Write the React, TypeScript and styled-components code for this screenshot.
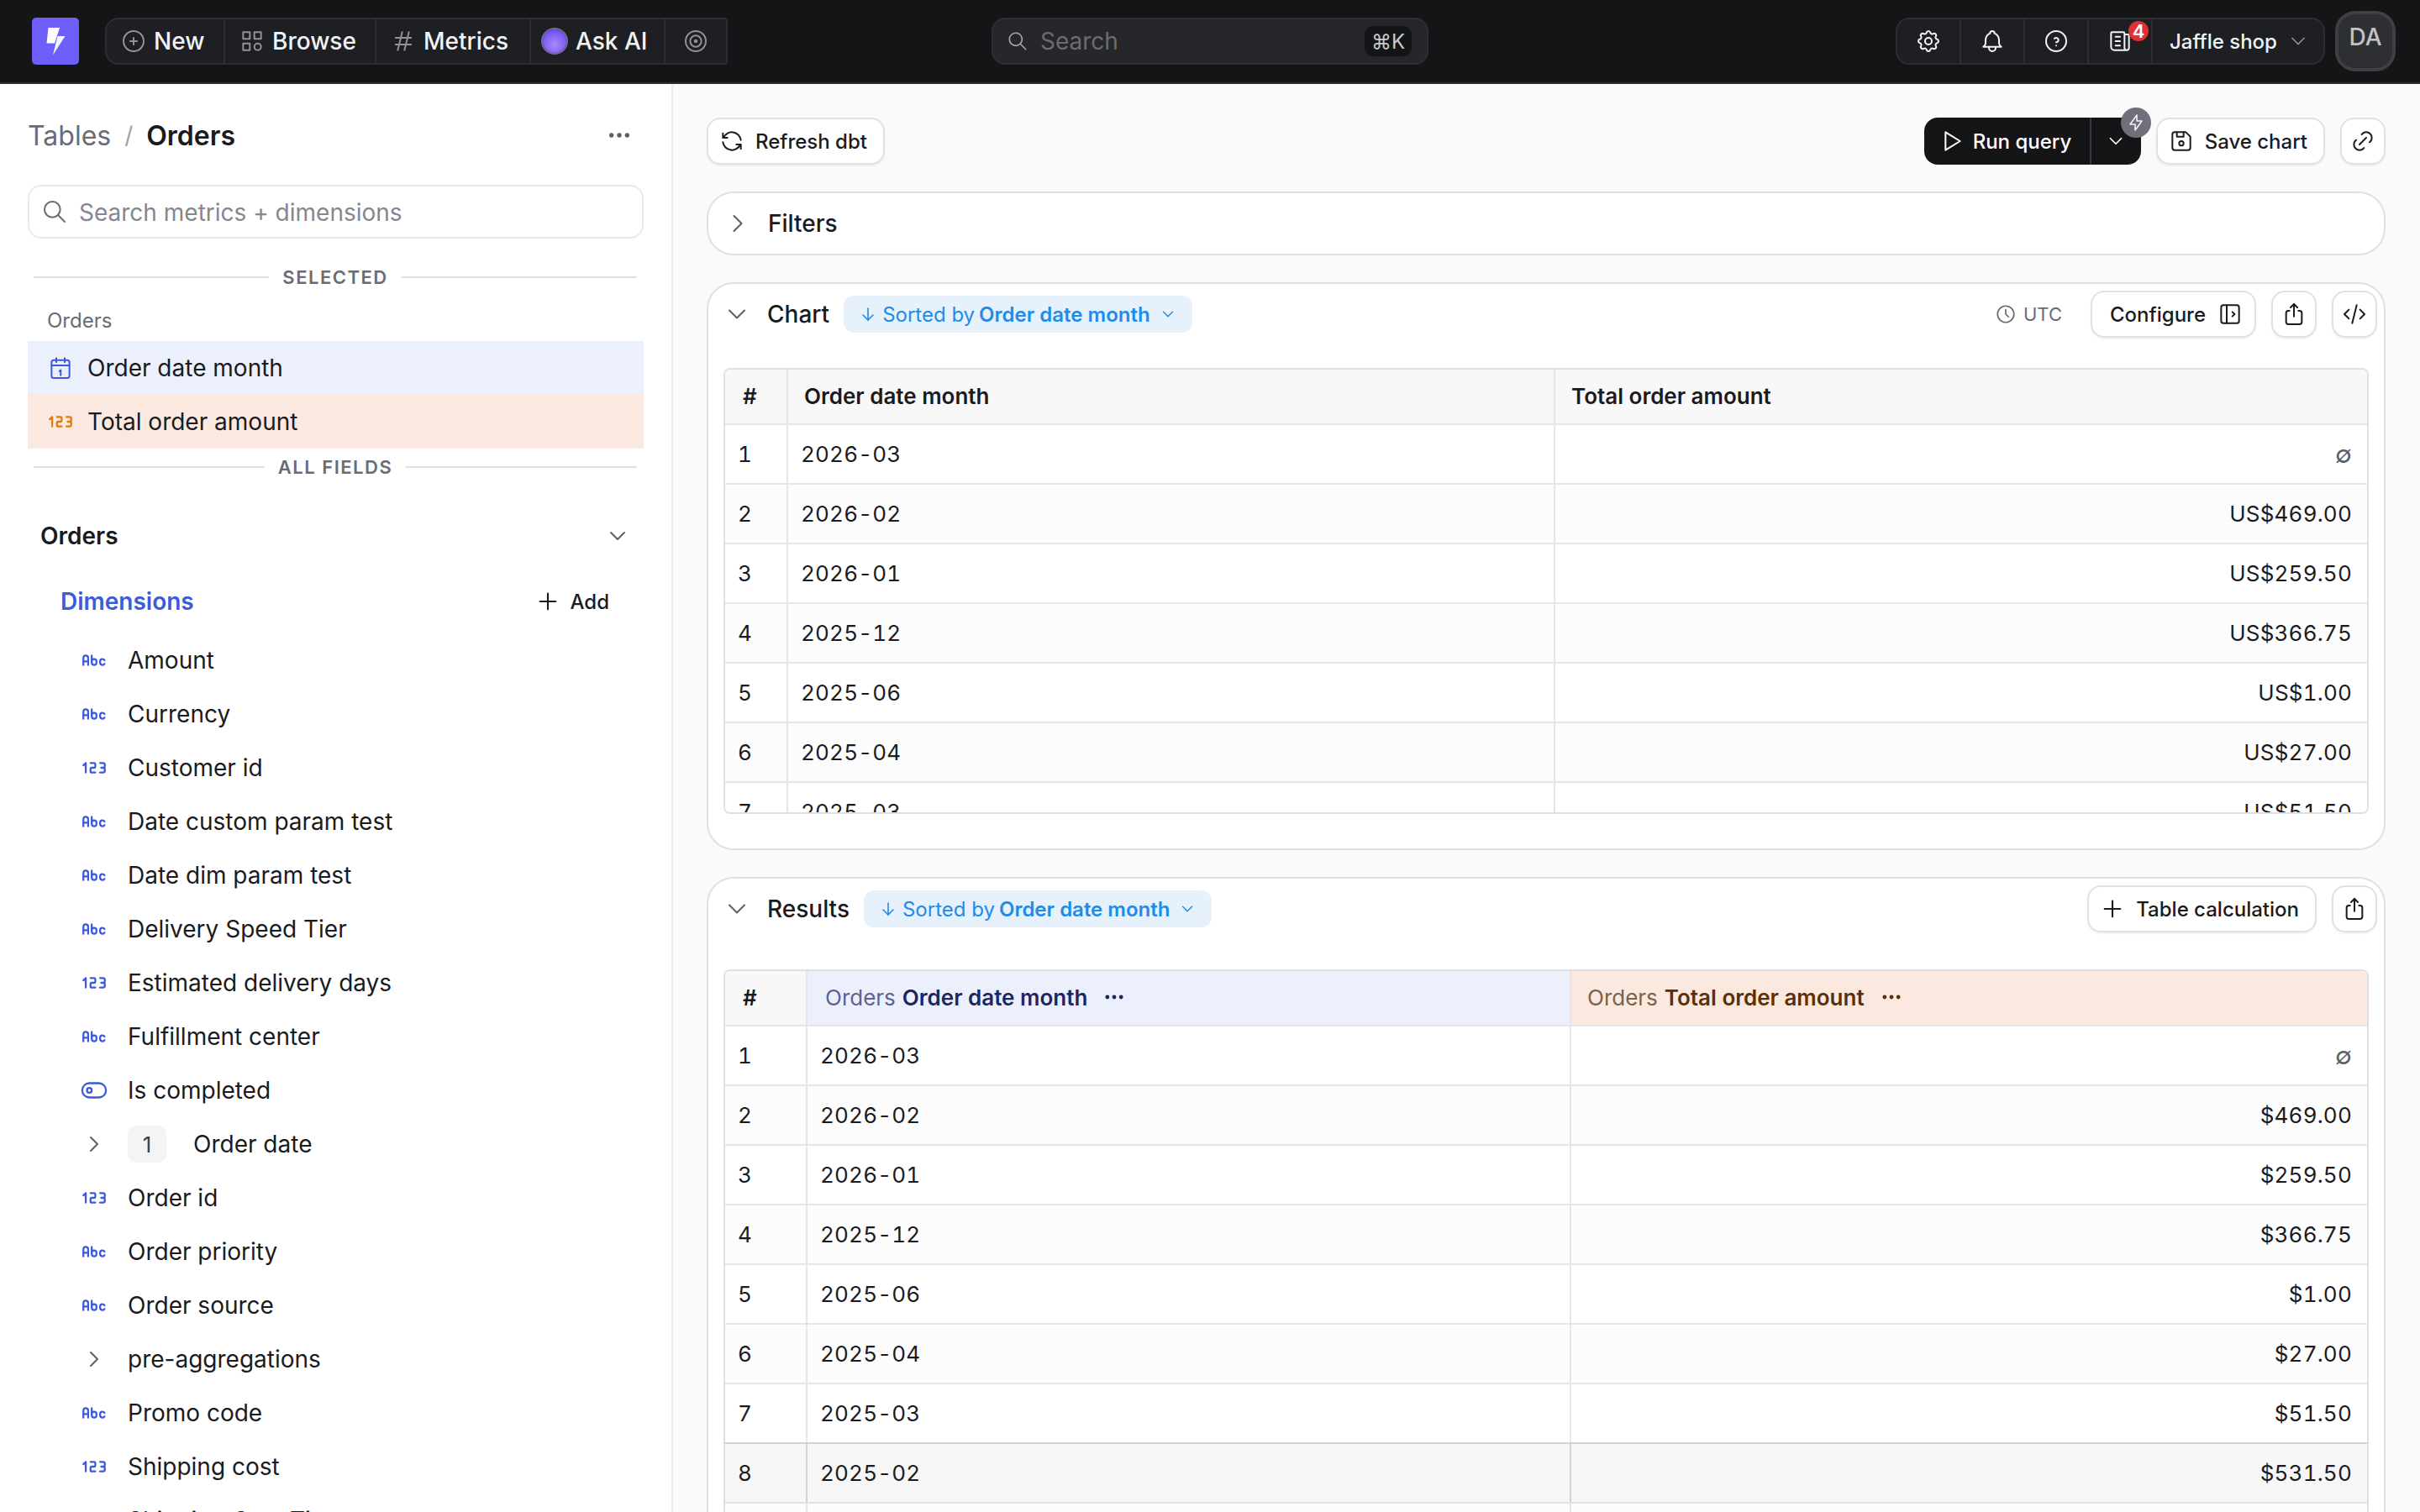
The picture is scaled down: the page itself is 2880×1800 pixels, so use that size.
import { FC, ReactNode } from "react";
import styled, { createGlobalStyle } from "styled-components";
import {
  TbAbc,
  TbBell,
  TbBolt,
  TbCategory,
  TbChevronDown,
  TbChevronRight,
  TbCirclePlus,
  TbClock,
  TbCode,
  TbDeviceFloppy,
  TbDots,
  TbHash,
  TbHelpCircle,
  TbLayoutSidebarLeftExpand,
  TbLink,
  TbNews,
  TbNumber123,
  TbPlayerPlay,
  TbPlus,
  TbRefresh,
  TbSearch,
  TbSettings,
  TbShare2,
  TbTarget,
  TbToggleLeft,
  TbArrowDown,
} from "react-icons/tb";

const GlobalStyle = createGlobalStyle`
  html, body {
    margin: 0;
    height: 1800px;
    overflow: hidden;
    background: #fafafa;
  }
  body, button, input {
    font-family: Inter, "Noto Sans", sans-serif;
    color: #1a1b1e;
  }
  * { box-sizing: border-box; }
`;

const Page = styled.div`
  display: flex;
  flex-direction: column;
  height: 1800px;
  overflow: hidden;
`;

/* top bar */

const TopBar = styled.header`
  display: grid;
  grid-template-columns: 1fr 520px 1fr;
  align-items: center;
  height: 100px;
  padding: 0 29px;
  background: #141517;
  border-bottom: 2px solid #2c2e33;
  flex: none;
`;

const BarSide = styled.div<{ $end?: boolean }>`
  display: flex;
  align-items: center;
  justify-content: ${(p) => (p.$end ? "flex-end" : "flex-start")};
`;

const Logo = styled.svg`
  width: 56px;
  height: 56px;
  margin: 0 31px 0 9px;
  flex: none;
`;

const SegGroup = styled.div<{ $roundEnd?: boolean }>`
  display: flex;
  height: 56px;
  background: #1e1f22;
  border: 2px solid #2c2e33;
  border-radius: ${(p) => (p.$roundEnd ? "16px" : "16px 4px 4px 16px")};
  overflow: hidden;
`;

const NavItem = styled.div<{ $w: number }>`
  display: flex;
  align-items: center;
  gap: 8px;
  width: ${(p) => p.$w}px;
  padding-left: 16px;
  font-size: 28px;
  font-weight: 500;
  color: #f1f3f5;
  border-right: 2px solid #2c2e33;
  &:last-child { border-right: 0; }
  svg { color: #909296; flex: none; }
`;

const IconSeg = styled.div<{ $w?: number }>`
  position: relative;
  display: flex;
  align-items: center;
  justify-content: center;
  width: ${(p) => p.$w ?? 76}px;
  color: #f1f3f5;
  border-right: 2px solid #2c2e33;
  &:last-child { border-right: 0; }
`;

const Sphere = styled.span`
  width: 28px;
  height: 28px;
  border-radius: 50%;
  flex: none;
  margin-left: -2px;
  margin-right: 3px;
  background: radial-gradient(circle at 50% 65%, #a78bfa 0%, #7c5cf5 60%, #5b3fd6 100%);
  box-shadow: 0 0 0 2px rgba(190, 170, 255, 0.55);
`;

const BarSearch = styled.div`
  display: flex;
  align-items: center;
  height: 56px;
  padding: 0 16px 0 16px;
  gap: 14px;
  background: #27272b;
  border: 2px solid #2e2f33;
  border-radius: 16px;
  font-size: 28px;
  color: #6b6c72;
  svg { color: #a6a7ab; }
`;

const Kbd = styled.span`
  margin-left: auto;
  display: flex;
  align-items: center;
  justify-content: center;
  width: 60px;
  height: 40px;
  background: #141517;
  border: 2px solid #25262b;
  border-radius: 12px;
  font-size: 24px;
  color: #c9cacd;
`;

const CountBadge = styled.span`
  position: absolute;
  top: 2px;
  right: 3px;
  width: 24px;
  height: 24px;
  border-radius: 50%;
  background: #e03131;
  color: #fff;
  font-size: 22px;
  font-weight: 600;
  line-height: 24px;
  text-align: center;
`;

const Workspace = styled.div`
  display: flex;
  align-items: center;
  width: 203px;
  padding-left: 20px;
  gap: 11px;
  font-size: 24px;
  font-weight: 500;
  color: #f1f3f5;
  svg { color: #909296; }
`;

const Avatar = styled.div`
  width: 72px;
  height: 72px;
  margin-left: 12px;
  padding-top: 10px;
  border-radius: 24px;
  background: #2e2f33;
  border: 4px solid #3f4044;
  color: #c1c2c5;
  font-size: 28px;
  font-weight: 500;
  text-align: center;
`;

/* layout */

const Body = styled.div`
  flex: 1;
  min-height: 0;
  display: grid;
  grid-template-columns: 801px 1fr;
`;

const Sidebar = styled.aside`
  background: #fff;
  border-right: 2px solid #ececee;
  padding: 41px 33px 0;
  overflow: hidden;
`;

const Crumbs = styled.div`
  display: flex;
  align-items: center;
  height: 40px;
  margin-bottom: 39px;
  font-size: 32px;
  color: #6b6b74;
  svg { margin-left: auto; margin-right: 13px; color: #5c5f66; }
`;

const CrumbSep = styled.span`
  margin: 0 16px;
  font-size: 28px;
  color: #a0a2a8;
`;

const CrumbNow = styled.span`
  font-weight: 600;
  color: #1a1b1e;
`;

const SideSearch = styled.div`
  display: flex;
  align-items: center;
  gap: 13px;
  height: 64px;
  padding: 2px 0 0 14px;
  border: 2px solid #e9e9ec;
  border-radius: 16px;
  font-size: 28px;
  color: #868690;
  svg { color: #6b6b74; margin-top: -2px; }
`;

const Divider = styled.div<{ $top: number }>`
  display: flex;
  align-items: center;
  gap: 16px;
  height: 30px;
  margin: ${(p) => p.$top}px 8px 0 7px;
  font-size: 22px;
  font-weight: 600;
  letter-spacing: 1.5px;
  color: #6b6b74;
  &::before, &::after {
    content: "";
    flex: 1;
    height: 2px;
    background: #dee0e4;
  }
`;

const TableLabel = styled.div`
  height: 30px;
  margin: 22px 0 9px 23px;
  font-size: 24px;
  line-height: 30px;
  color: #6b6b74;
`;

const SelectedRow = styled.div<{ $bg: string; $fg: string }>`
  display: flex;
  align-items: center;
  height: 64px;
  padding-left: 19px;
  gap: 12px;
  background: ${(p) => p.$bg};
  font-size: 28px;
  svg { color: ${(p) => p.$fg}; }
`;

const IconBox = styled.span`
  display: flex;
  align-items: center;
  justify-content: center;
  width: 40px;
  flex: none;
`;

const GroupTitle = styled.div`
  display: flex;
  align-items: center;
  justify-content: space-between;
  height: 40px;
  margin-top: 47px;
  padding: 0 15px;
  font-size: 28px;
  font-weight: 600;
  svg { color: #5c5f66; }
`;

const SectionTitle = styled.div`
  display: flex;
  align-items: center;
  justify-content: space-between;
  height: 40px;
  margin-top: 38px;
  padding: 0 41px 0 39px;
  font-size: 28px;
  font-weight: 600;
  color: #3b5bdb;
`;

const AddLink = styled.span`
  display: flex;
  align-items: center;
  gap: 11px;
  font-size: 24px;
  font-weight: 500;
  color: #1a1b1e;
`;

const FieldList = styled.div`
  margin-top: 18px;
`;

const FieldRow = styled.div`
  display: flex;
  align-items: center;
  height: 64px;
  padding-left: 59px;
  gap: 20px;
  font-size: 28px;
  svg { color: #3b5bdb; }
`;

const CountChip = styled.span`
  display: flex;
  align-items: center;
  justify-content: center;
  width: 46px;
  height: 44px;
  margin-right: 12px;
  border-radius: 10px;
  background: #f4f4f5;
  font-size: 26px;
  color: #3f4046;
`;

const Main = styled.main`
  min-width: 0;
  padding: 40px 41px 0 40px;
  overflow: hidden;
`;

const Toolbar = styled.div`
  display: flex;
  align-items: center;
  height: 56px;
  margin-bottom: 32px;
`;

const Button = styled.button<{ $square?: boolean; $left?: number; $trailing?: boolean }>`
  display: flex;
  align-items: center;
  justify-content: center;
  gap: ${(p) => (p.$trailing ? 13 : 12)}px;
  height: 56px;
  margin-left: ${(p) => p.$left ?? 0}px;
  padding: ${(p) => (p.$square ? "0" : p.$trailing ? "0 13px 0 21px" : "0 19px 0 12px")};
  width: ${(p) => (p.$square ? "54px" : "auto")};
  background: #fff;
  border: 2px solid #e0e0e5;
  border-radius: 16px;
  box-shadow: 0 2px 2px rgba(20, 20, 30, 0.05);
  font-size: 24px;
  font-weight: 500;
  color: #1a1b1e;
`;

const RunWrap = styled.div`
  position: relative;
  display: flex;
  align-items: center;
  height: 56px;
  margin-left: auto;
  margin-right: 18px;
  background: #141517;
  border-radius: 16px;
  color: #fff;
  font-size: 24px;
  font-weight: 500;
`;

const RunMain = styled.span`
  display: flex;
  align-items: center;
  gap: 10px;
  width: 199px;
  height: 100%;
  padding-left: 16px;
  border-right: 2px solid #3a3b40;
`;

const RunCaret = styled.span`
  display: flex;
  align-items: center;
  justify-content: center;
  width: 59px;
`;

const BoltBadge = styled.span`
  position: absolute;
  top: -12px;
  right: -12px;
  display: flex;
  align-items: center;
  justify-content: center;
  width: 36px;
  height: 36px;
  border-radius: 50%;
  background: #6f7079;
  color: #f1f3f5;
`;

const FilterCard = styled.section`
  display: flex;
  align-items: center;
  gap: 18px;
  height: 76px;
  margin-bottom: 32px;
  padding-left: 17px;
  background: #fff;
  border: 2px solid #dee0e4;
  border-radius: 32px;
  font-size: 28px;
  font-weight: 500;
  svg { color: #5c5f66; }
`;

const Card = styled.section<{ $height: number }>`
  height: ${(p) => p.$height}px;
  margin-bottom: 32px;
  padding: 8px;
  background: #fff;
  border: 2px solid #dee0e4;
  border-radius: 32px;
`;

const CardHead = styled.div`
  display: flex;
  align-items: center;
  height: 56px;
  padding-left: 8px;
  font-size: 28px;
  font-weight: 500;
  > svg:first-child { color: #5c5f66; margin-right: 18px; }
`;

const SortPill = styled.span`
  display: flex;
  align-items: center;
  height: 44px;
  margin-left: 17px;
  padding: 0 18px 0 17px;
  border-radius: 12px;
  background: #e7f1fb;
  color: #228be6;
  font-size: 24px;
  font-weight: 400;
  b { font-weight: 600; margin-left: 5px; }
  svg:first-child { margin-right: 5px; }
  svg:last-child { margin-left: 10px; }
`;

const Utc = styled.span`
  display: flex;
  align-items: center;
  gap: 8px;
  margin-left: auto;
  margin-right: 34px;
  font-size: 22px;
  font-weight: 400;
  color: #6b6b74;
`;

const HeadRight = styled.span`
  margin-left: auto;
`;

const DataTable = styled.div<{ $top: number; $height?: number }>`
  margin: ${(p) => p.$top}px 10px 0 10px;
  ${(p) => (p.$height ? `height: ${p.$height}px;` : "")}
  border: 2px solid #dee0e4;
  border-radius: 8px;
  overflow: hidden;
`;

const Row = styled.div<{ $cols: string; $stripe?: boolean; $hovered?: boolean; $head?: boolean }>`
  display: grid;
  grid-template-columns: ${(p) => p.$cols};
  height: ${(p) => (p.$head ? 66 : 71)}px;
  border-bottom: 2px solid ${(p) => (p.$hovered ? "#e2e2e5" : "#e6e6e9")};
  background: ${(p) => (p.$hovered ? "#f6f6f6" : p.$stripe ? "#fcfcfc" : "#fff")};
  ${(p) => (p.$hovered ? "box-shadow: 0 -2px 0 #d2d2d4;" : "")}
`;

const Cell = styled.div<{ $right?: boolean; $hovered?: boolean }>`
  display: flex;
  align-items: center;
  justify-content: ${(p) => (p.$right ? "flex-end" : "flex-start")};
  padding: 0 18px 1px 15px;
  font-size: 26px;
  letter-spacing: 0.2px;
  font-feature-settings: "tnum";
  white-space: nowrap;
  border-right: 2px solid ${(p) => (p.$hovered ? "#d2d2d4" : "#e6e6e9")};
  &:last-child { border-right: 0; }
`;

const NullMark = styled.span`
  font-size: 29px;
  color: #5c5f66;
`;

const HeadCell = styled.div<{ $bg: string; $fg: string; $soft: string; $pad: number }>`
  display: flex;
  align-items: center;
  gap: 8px;
  padding: 0 0 2px ${(p) => p.$pad}px;
  background: ${(p) => p.$bg};
  font-size: 26px;
  font-weight: 600;
  color: ${(p) => p.$fg};
  border-right: 2px solid #e6e6e9;
  white-space: nowrap;
  &:last-child { border-right: 0; }
  i { font-style: normal; font-weight: 400; color: ${(p) => p.$soft}; }
  svg { margin-left: 10px; }
`;

/* icons */

const CalendarIcon = () => (
  <svg width="30" height="30" viewBox="0 0 24 24" fill="none" stroke="currentColor" strokeWidth="1.6" strokeLinecap="round" strokeLinejoin="round">
    <rect x="3.5" y="4.5" width="17" height="17" rx="2" />
    <path d="M16 2.5v4M8 2.5v4M3.5 9.5h17M11 15l1.2-1v5" />
  </svg>
);

type Field = {
  name: string;
  kind: "abc" | "num" | "bool" | "group";
  count?: number;
};

const fields: Field[] = [
  { name: "Amount", kind: "abc" },
  { name: "Currency", kind: "abc" },
  { name: "Customer id", kind: "num" },
  { name: "Date custom param test", kind: "abc" },
  { name: "Date dim param test", kind: "abc" },
  { name: "Delivery Speed Tier", kind: "abc" },
  { name: "Estimated delivery days", kind: "num" },
  { name: "Fulfillment center", kind: "abc" },
  { name: "Is completed", kind: "bool" },
  { name: "Order date", kind: "group", count: 1 },
  { name: "Order id", kind: "num" },
  { name: "Order priority", kind: "abc" },
  { name: "Order source", kind: "abc" },
  { name: "pre-aggregations", kind: "group" },
  { name: "Promo code", kind: "abc" },
  { name: "Shipping cost", kind: "num" },
  { name: "Shipping Cost Tier", kind: "abc" },
];

const rows: [string, string | null][] = [
  ["2026-03", null],
  ["2026-02", "469.00"],
  ["2026-01", "259.50"],
  ["2025-12", "366.75"],
  ["2025-06", "1.00"],
  ["2025-04", "27.00"],
  ["2025-03", "51.50"],
  ["2025-02", "531.50"],
];

const FieldIcon: FC<{ kind: Field["kind"] }> = ({ kind }) => {
  if (kind === "abc") return <TbAbc size={34} strokeWidth={1.6} />;
  if (kind === "num") return <TbNumber123 size={34} strokeWidth={1.6} />;
  if (kind === "bool") return <TbToggleLeft size={34} strokeWidth={1.6} />;
  return <TbChevronRight size={32} strokeWidth={1.5} style={{ color: "#5c5f66" }} />;
};

const Rows: FC<{ cols: string; prefix: string; hoverIndex?: number; tail?: boolean }> = ({
  cols,
  prefix,
  hoverIndex,
  tail,
}) => (
  <>
    {rows.map(([month, value], i) => (
      <Row key={month} $cols={cols} $stripe={i % 2 === 1} $hovered={i === hoverIndex}>
        <Cell $hovered={i === hoverIndex}>{i + 1}</Cell>
        <Cell $hovered={i === hoverIndex}>{month}</Cell>
        <Cell $right>
          {value ? `${prefix}${value}` : <NullMark>∅</NullMark>}
        </Cell>
      </Row>
    ))}
    {tail ? (
      <Row $cols={cols} $stripe>
        <Cell />
        <Cell />
        <Cell />
      </Row>
    ) : null}
  </>
);

const SortBadge = () => (
  <SortPill>
    <TbArrowDown size={24} strokeWidth={1.6} />
    Sorted by<b>Order date month</b>
    <TbChevronDown size={22} strokeWidth={1.6} />
  </SortPill>
);

const Nav: FC<{ w: number; icon: ReactNode; label: string }> = ({ w, icon, label }) => (
  <NavItem $w={w}>
    {icon}
    {label}
  </NavItem>
);

const CHART_COLS = "75px 913px 1fr";
const RESULT_COLS = "98px 909px 1fr";

const App: FC = () => (
  <Page>
    <GlobalStyle />
    <TopBar>
      <BarSide>
        <Logo viewBox="0 0 56 56">
          <rect width="56" height="56" rx="5" fill="#6e5ffb" />
          <path d="M19.5 12H33L27 30.5H17.5Z" fill="#fff" />
          <path d="M30.5 22H39.5L25 44.5Z" fill="#f4f2ff" />
        </Logo>
        <SegGroup>
          <Nav w={141} icon={<TbCirclePlus size={32} strokeWidth={1.5} />} label="New" />
          <Nav w={180} icon={<TbCategory size={32} strokeWidth={1.5} />} label="Browse" />
          <Nav w={184} icon={<TbHash size={32} strokeWidth={1.5} />} label="Metrics" />
          <Nav w={160} icon={<Sphere />} label="Ask AI" />
          <IconSeg $w={72}>
            <TbTarget size={32} strokeWidth={1.5} color="#909296" />
          </IconSeg>
        </SegGroup>
      </BarSide>
      <BarSearch>
        <TbSearch size={26} strokeWidth={1.5} />
        Search
        <Kbd>⌘K</Kbd>
      </BarSearch>
      <BarSide $end>
        <SegGroup $roundEnd>
          <IconSeg>
            <TbSettings size={32} strokeWidth={1.5} />
          </IconSeg>
          <IconSeg>
            <TbBell size={32} strokeWidth={1.5} />
          </IconSeg>
          <IconSeg>
            <TbHelpCircle size={32} strokeWidth={1.5} />
          </IconSeg>
          <IconSeg>
            <TbNews size={32} strokeWidth={1.5} />
            <CountBadge>4</CountBadge>
          </IconSeg>
          <Workspace>
            Jaffle shop
            <TbChevronDown size={28} strokeWidth={1.5} />
          </Workspace>
        </SegGroup>
        <Avatar>DA</Avatar>
      </BarSide>
    </TopBar>
    <Body>
      <Sidebar>
        <Crumbs>
          Tables<CrumbSep>/</CrumbSep>
          <CrumbNow>Orders</CrumbNow>
          <TbDots size={32} strokeWidth={2} />
        </Crumbs>
        <SideSearch>
          <TbSearch size={32} strokeWidth={1.5} />
          Search metrics + dimensions
        </SideSearch>
        <Divider $top={31}>SELECTED</Divider>
        <TableLabel>Orders</TableLabel>
        <SelectedRow $bg="#ecf0fd" $fg="#3b5bdb">
          <IconBox>
            <CalendarIcon />
          </IconBox>
          Order date month
        </SelectedRow>
        <SelectedRow $bg="#fbe9e0" $fg="#e07b0c">
          <IconBox>
            <TbNumber123 size={34} strokeWidth={1.6} />
          </IconBox>
          Total order amount
        </SelectedRow>
        <Divider $top={7}>ALL FIELDS</Divider>
        <GroupTitle>
          Orders
          <TbChevronDown size={32} strokeWidth={1.5} />
        </GroupTitle>
        <SectionTitle>
          Dimensions
          <AddLink>
            <TbPlus size={32} strokeWidth={1.6} color="#1a1b1e" />
            Add
          </AddLink>
        </SectionTitle>
        <FieldList>
          {fields.map((f) => (
            <FieldRow key={f.name}>
              <IconBox>
                <FieldIcon kind={f.kind} />
              </IconBox>
              {f.count ? <CountChip>{f.count}</CountChip> : null}
              {f.name}
            </FieldRow>
          ))}
        </FieldList>
      </Sidebar>
      <Main>
        <Toolbar>
          <Button>
            <TbRefresh size={32} strokeWidth={1.5} />
            Refresh dbt
          </Button>
          <RunWrap>
            <RunMain>
              <TbPlayerPlay size={32} strokeWidth={1.5} />
              Run query
            </RunMain>
            <RunCaret>
              <TbChevronDown size={26} strokeWidth={1.6} />
            </RunCaret>
            <BoltBadge>
              <TbBolt size={24} strokeWidth={1.6} />
            </BoltBadge>
          </RunWrap>
          <Button>
            <TbDeviceFloppy size={32} strokeWidth={1.5} />
            Save chart
          </Button>
          <Button $square $left={18}>
            <TbLink size={32} strokeWidth={1.5} />
          </Button>
        </Toolbar>
        <FilterCard>
          <TbChevronRight size={36} strokeWidth={1.4} />
          Filters
        </FilterCard>
        <Card $height={676}>
          <CardHead>
            <TbChevronDown size={36} strokeWidth={1.4} />
            Chart
            <SortBadge />
            <Utc>
              <TbClock size={26} strokeWidth={1.6} />
              UTC
            </Utc>
            <Button $trailing>
              Configure
              <TbLayoutSidebarLeftExpand size={32} strokeWidth={1.5} />
            </Button>
            <Button $square $left={18}>
              <TbShare2 size={32} strokeWidth={1.5} />
            </Button>
            <Button $square $left={18}>
              <TbCode size={32} strokeWidth={1.5} />
            </Button>
          </CardHead>
          <DataTable $top={36} $height={531}>
            <Row $cols={CHART_COLS} $head>
              <HeadCell $bg="#f8f8f9" $fg="#1a1b1e" $soft="#6b6b74" $pad={21}>#</HeadCell>
              <HeadCell $bg="#f8f8f9" $fg="#1a1b1e" $soft="#6b6b74" $pad={19}>Order date month</HeadCell>
              <HeadCell $bg="#f8f8f9" $fg="#1a1b1e" $soft="#6b6b74" $pad={19}>Total order amount</HeadCell>
            </Row>
            <Rows cols={CHART_COLS} prefix="US$" />
          </DataTable>
        </Card>
        <Card $height={900}>
          <CardHead>
            <TbChevronDown size={36} strokeWidth={1.4} />
            Results
            <SortBadge />
            <HeadRight />
            <Button>
              <TbPlus size={32} strokeWidth={1.6} />
              Table calculation
            </Button>
            <Button $square $left={18}>
              <TbShare2 size={32} strokeWidth={1.5} />
            </Button>
          </CardHead>
          <DataTable $top={44}>
            <Row $cols={RESULT_COLS} $head>
              <HeadCell $bg="#f8f8f9" $fg="#1a1b1e" $soft="#6b6b74" $pad={21}>#</HeadCell>
              <HeadCell $bg="#ecf0fd" $fg="#1c2661" $soft="#5a6397" $pad={21}>
                <i>Orders</i>Order date month
                <TbDots size={28} strokeWidth={2.2} />
              </HeadCell>
              <HeadCell $bg="#fbe9e0" $fg="#5a300a" $soft="#7d6149" $pad={19}>
                <i>Orders</i>Total order amount
                <TbDots size={28} strokeWidth={2.2} />
              </HeadCell>
            </Row>
            <Rows cols={RESULT_COLS} prefix="$" hoverIndex={7} tail />
          </DataTable>
        </Card>
      </Main>
    </Body>
  </Page>
);

export default App;
